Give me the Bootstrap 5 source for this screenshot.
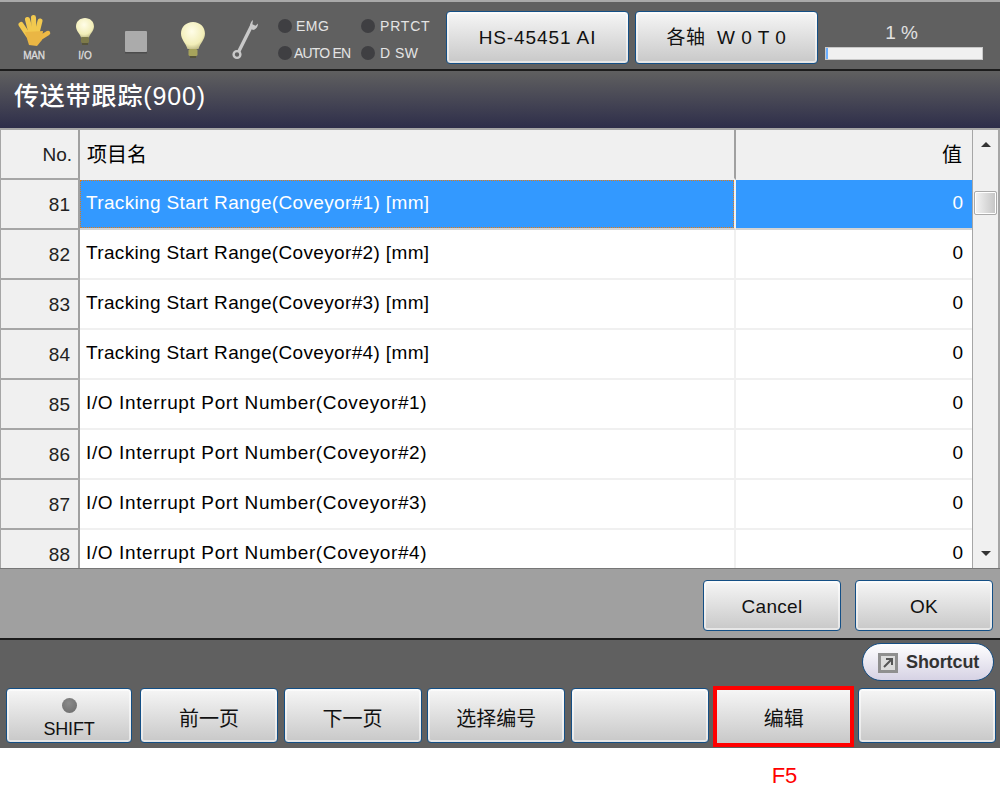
<!DOCTYPE html>
<html lang="zh">
<head>
<meta charset="utf-8">
<title>传送带跟踪</title>
<link href="https://cdn.jsdelivr.net/npm/bootstrap@5.3.0/dist/css/bootstrap.min.css" rel="stylesheet">
<style>
html,body{margin:0;background:#fff}
body{width:1000px;height:788px;overflow:hidden;font-family:"Liberation Sans","Noto Sans CJK SC",sans-serif;color:#000}
.topstrip{height:71px;background:#606060;border-top:2px solid #a9a9a9;border-bottom:2px solid #1c1c1c}
.ic{flex:none}
.ic-hand{width:36px;margin:11px 0 0 16px}
.ic-io{width:24px;margin:13px 0 0 21px}
.ic-sq{width:24px;margin:28px 0 0 27px}
.ic-bulb{width:28px;margin:18px 0 0 31px}
.ic-wr{width:30px;margin:15px 0 0 24px}
.ic svg{display:block}
.ic-label{font-size:10px;font-weight:400;-webkit-text-stroke:.3px #ddd;color:#ddd;line-height:11px;text-align:center;margin-top:3px}
.ic-hand .ic-label{margin-top:3px;letter-spacing:-.3px}
.leds{width:168px;margin:10px 0 0 17px;display:grid;grid-template-columns:83px 85px;grid-auto-rows:27px;font-size:14px;color:#e4e4e4}
.led{display:flex;align-items:center;gap:5px;line-height:1}
.led i{width:14px;height:14px;border-radius:50%;background:#3f3f42;flex:none}
.led.emg{gap:4px;letter-spacing:.5px}
.led.auto{gap:2px;letter-spacing:-.8px}
.led.prt{letter-spacing:.8px}
.led.dsw{letter-spacing:.5px}
.btn.hmi{--bs-btn-padding-x:0;--bs-btn-padding-y:0;--bs-btn-border-radius:4px;background:linear-gradient(#f6f6f6,#c8c8c8);border:1px solid #144f85;box-shadow:inset 0 0 0 2px rgba(255,255,255,.55);color:#111;font-size:19px;line-height:1.2;display:flex;flex-direction:column;align-items:center;justify-content:center;flex:none}
.top-a{width:183px;height:53px;margin:9px 0 0 0;padding-top:1px;letter-spacing:.9px}
.top-b{margin-left:6px;letter-spacing:.5px}
.pct{width:158px;margin:0 0 0 7px;padding-top:19px;color:#e2e2e2;text-align:center;font-size:19px;line-height:24px}
.pct-label{display:block;padding-right:5px}
.pct .progress{--bs-progress-height:13px;--bs-progress-bg:#f0f0f0;--bs-progress-bar-bg:#6aaeff;--bs-progress-border-radius:0;border:1px solid #c8c8c8;margin-top:2px}
.titlebar{height:57px;background:linear-gradient(#606060,#2e2e4a);color:#fff;font-size:25px;line-height:50px;padding-left:14px;letter-spacing:.85px;font-weight:500}
.gridwrap{height:441px;background:#a6a6a6;padding:2px 2px 0 1px;overflow:hidden;display:flex;border-bottom:1px solid #777}
.tablebox{width:971px;flex:none;height:438px;overflow:hidden}
.table.hmi-t{table-layout:fixed;width:971px;margin:0;--bs-table-bg:#fff;border-collapse:separate;border-spacing:0}
.hmi-t th,.hmi-t td{height:50px;padding:0 9px 2px 6px;border:0;font-weight:400;font-size:19px;line-height:1.2;vertical-align:middle;white-space:nowrap;color:#000;box-shadow:none}
.hmi-t th{padding:2px 9px 0 7px}
.hmi-t .cno{width:79px;background:#f0f0f0;text-align:right;border-right:2px solid #a0a0a0;border-bottom:2px solid #a6a6a6;color:#222}
.hmi-t td.cno{padding:2px 8px 0 0}
.hmi-t th.cno{padding-right:6px}
.hmi-t .cname{width:656px;border-right:2px solid #f0f0f0;border-bottom:2px solid #f0f0f0;letter-spacing:.35px}
.hmi-t .io{letter-spacing:.62px}
.hmi-t .cval{text-align:right;border-bottom:2px solid #f0f0f0}
.hmi-t thead th{background:#f0f0f0;border-bottom:2px solid #a6a6a6}
.hmi-t thead .cname{border-right:2px solid #a0a0a0;font-size:20px;letter-spacing:0}
.hmi-t thead .cval{font-size:20px;padding-right:10px}
.hmi-t tr.sel td.cval{background:#3399ff;color:#fff;border-bottom-color:#d4d4d4}
.hmi-t tr.sel td.cname{padding:0;color:#fff;border-bottom-color:#d4d4d4;background:#3399ff}
.focusbox{height:48px;border:1px dotted #e07a18;display:flex;align-items:center;padding:0 0 2px 5px}
.sbar{width:26px;margin-left:1px;height:438px;background:#f0f0f0;display:flex;flex-direction:column;align-items:center}
.arrow-up,.arrow-dn{width:0;height:0;border-left:5px solid transparent;border-right:5px solid transparent;flex:none}
.arrow-up{border-bottom:5px solid #333;margin-top:12px}
.arrow-dn{border-top:5px solid #333;margin-top:336px}
.thumb{width:23px;height:24px;margin-top:44px;border:1px solid #aaa;border-radius:2px;background:linear-gradient(90deg,#f4f4f4,#c4c4c4);box-shadow:inset 0 0 0 1px #fff;flex:none}
.actions{height:71px;background:#a0a0a0;border-bottom:2px solid #1c1c1c;padding:11px 7px 0 0;gap:14px}
.act{width:138px;height:51px;font-size:18px;padding-top:3px;letter-spacing:.3px}
.dock{height:108px;background:#606060;padding-top:3px}
.shortrow{height:45px;padding-right:6px}
.shortcut{height:38px;width:132px;border:1px solid #164f85;border-radius:19px;background:linear-gradient(#fff,#d6d2e4);display:flex;align-items:center;padding-left:15px;padding-top:1px;gap:8px;color:#333;font-size:18px;font-weight:700;letter-spacing:-.1px}
.fkeys{padding-left:6px;gap:5.6px}
.btn.hmi.fkey{width:138px;height:55px;font-size:20px;padding-top:6px}
.btn.hmi.shift{width:126px;margin-right:2.4px;font-size:18px;justify-content:flex-start;padding-top:9px;letter-spacing:-.2px}
.shift i{width:15px;height:15px;border-radius:50%;background:radial-gradient(circle at 45% 35%,#8a8a8a,#6a6a6a);margin-bottom:6px}
.btn.hmi.hot{width:141px;height:61px;margin:-2px -2px -4px -1px;border:4px solid #f00;border-radius:0;box-shadow:none;padding-top:4px}
.fnote{padding:16px 0 0 714px}
.fnote span{display:block;width:141px;text-align:center;color:#f00;font-size:22px;line-height:24px}
</style>
</head>
<body>
<svg width="0" height="0" class="d-block">
  <defs>
    <radialGradient id="glass" cx="45%" cy="35%" r="70%"><stop offset="0" stop-color="#fffde8"/><stop offset=".7" stop-color="#f2eeb8"/><stop offset="1" stop-color="#b9b481"/></radialGradient>
  </defs>
</svg>
<div class="topstrip d-flex align-items-start">
  <div class="ic ic-hand">
    <svg width="36" height="34" viewBox="0 0 36 34"><g fill="none" stroke-width="5" stroke-linecap="round"><path d="M5 11.500 12 22" stroke="#f2c94f"/><path d="M11.500 6.500 15 20" stroke="#f2c94f"/><path d="M17.500 4.500 18 20" stroke="#f2c94f"/><path d="M24 8 21 20" stroke="#f2c94f"/><path d="M32 20 24 25" stroke="#eeb945" stroke-width="4.500"/></g><path d="M9 19 27 18 26 27 21 33 13 32Z" fill="#eab644"/></svg>
    <div class="ic-label">MAN</div>
  </div>
  <div class="ic ic-io">
    <svg width="24" height="32" viewBox="0 0 24 32"><path d="M12 3C7 3 3 6.500 3 11.500c0 4.500 4 7 5 11h8c1-4 5-6.500 5-11C21 6.500 17 3 12 3Z" fill="url(#glass)"/><rect x="8" y="22" width="8" height="6" rx="1.500" fill="#7d7a4a"/><rect x="9" y="28" width="6" height="2" fill="#56543a"/></svg>
    <div class="ic-label">I/O</div>
  </div>
  <div class="ic ic-sq">
    <svg width="24" height="24" viewBox="0 0 24 24"><rect x="1" y="1" width="22" height="21" rx="1" fill="#ababab"/><rect x="1" y="22" width="22" height="1.500" fill="#4c4c4c"/></svg>
  </div>
  <div class="ic ic-bulb">
    <svg width="28" height="40" viewBox="0 0 28 40"><path d="M14 2C7 2 2 7 2 13.500c0 6 5 10 6.500 15.500h11C21 23.500 26 19.500 26 13.500 26 7 21 2 14 2Z" fill="url(#glass)"/><rect x="9.500" y="29" width="9" height="7" rx="1.500" fill="#a7a45c"/><rect x="11" y="36" width="6" height="2" fill="#56543a"/></svg>
  </div>
  <div class="ic ic-wr">
    <svg width="30" height="44" viewBox="0 0 30 44"><path d="M21 8 7.500 35" stroke="#c9c9c9" stroke-width="3.400" fill="none"/><path d="M19 11c-.5-3 .5-6 3-8l-.6 4.300 3.100 1.500 2.500-2.400c-.1 3.500-2 6-5 6.500Z" fill="#c9c9c9"/><circle cx="6" cy="37.500" r="3.400" fill="none" stroke="#c9c9c9" stroke-width="2.400"/></svg>
  </div>
  <div class="leds">
    <div class="led emg"><i></i>EMG</div>
    <div class="led prt"><i></i>PRTCT</div>
    <div class="led auto"><i></i>AUTO EN</div>
    <div class="led dsw"><i></i>D SW</div>
  </div>
  <button class="btn hmi top-a" type="button">HS-45451 AI</button>
  <button class="btn hmi top-a top-b" type="button">各轴&nbsp; W 0 T 0</button>
  <div class="pct">
    <span class="pct-label">1 %</span>
    <div class="progress"><div class="progress-bar" style="width:1%"></div></div>
  </div>
</div>
<div class="titlebar">传送带跟踪(900)</div>
<div class="gridwrap">
  <div class="tablebox">
    <table class="table hmi-t">
      <thead><tr><th class="cno">No.</th><th class="cname">项目名</th><th class="cval">值</th></tr></thead>
      <tbody>
        <tr class="sel"><td class="cno">81</td><td class="cname"><div class="focusbox">Tracking Start Range(Coveyor#1) [mm]</div></td><td class="cval">0</td></tr>
        <tr><td class="cno">82</td><td class="cname">Tracking Start Range(Coveyor#2) [mm]</td><td class="cval">0</td></tr>
        <tr><td class="cno">83</td><td class="cname">Tracking Start Range(Coveyor#3) [mm]</td><td class="cval">0</td></tr>
        <tr><td class="cno">84</td><td class="cname">Tracking Start Range(Coveyor#4) [mm]</td><td class="cval">0</td></tr>
        <tr><td class="cno">85</td><td class="cname io">I/O Interrupt Port Number(Coveyor#1)</td><td class="cval">0</td></tr>
        <tr><td class="cno">86</td><td class="cname io">I/O Interrupt Port Number(Coveyor#2)</td><td class="cval">0</td></tr>
        <tr><td class="cno">87</td><td class="cname io">I/O Interrupt Port Number(Coveyor#3)</td><td class="cval">0</td></tr>
        <tr><td class="cno">88</td><td class="cname io">I/O Interrupt Port Number(Coveyor#4)</td><td class="cval">0</td></tr>
      </tbody>
    </table>
  </div>
  <div class="sbar"><span class="arrow-up"></span><span class="thumb"></span><span class="arrow-dn"></span></div>
</div>
<div class="actions d-flex justify-content-end align-items-start">
  <button class="btn hmi act" type="button">Cancel</button>
  <button class="btn hmi act" type="button">OK</button>
</div>
<div class="dock">
  <div class="shortrow d-flex justify-content-end align-items-start">
    <div class="shortcut">
      <svg width="20" height="20" viewBox="0 0 20 20"><rect width="20" height="20" fill="#8f8f8f"/><rect x="3" y="3" width="14" height="14" fill="#dcdcdc"/><path d="M6 14 13 7M8 6h6v6" stroke="#555" stroke-width="2" fill="none"/></svg>
      <span>Shortcut</span>
    </div>
  </div>
  <div class="fkeys d-flex align-items-start">
    <button class="btn hmi fkey shift" type="button"><i></i>SHIFT</button>
    <button class="btn hmi fkey" type="button">前一页</button>
    <button class="btn hmi fkey" type="button">下一页</button>
    <button class="btn hmi fkey" type="button">选择编号</button>
    <button class="btn hmi fkey" type="button"></button>
    <button class="btn hmi fkey hot" type="button">编辑</button>
    <button class="btn hmi fkey" type="button"></button>
  </div>
</div>
<div class="fnote"><span>F5</span></div>
<script src="https://cdn.jsdelivr.net/npm/bootstrap@5.3.0/dist/js/bootstrap.bundle.min.js"></script>
</body>
</html>
